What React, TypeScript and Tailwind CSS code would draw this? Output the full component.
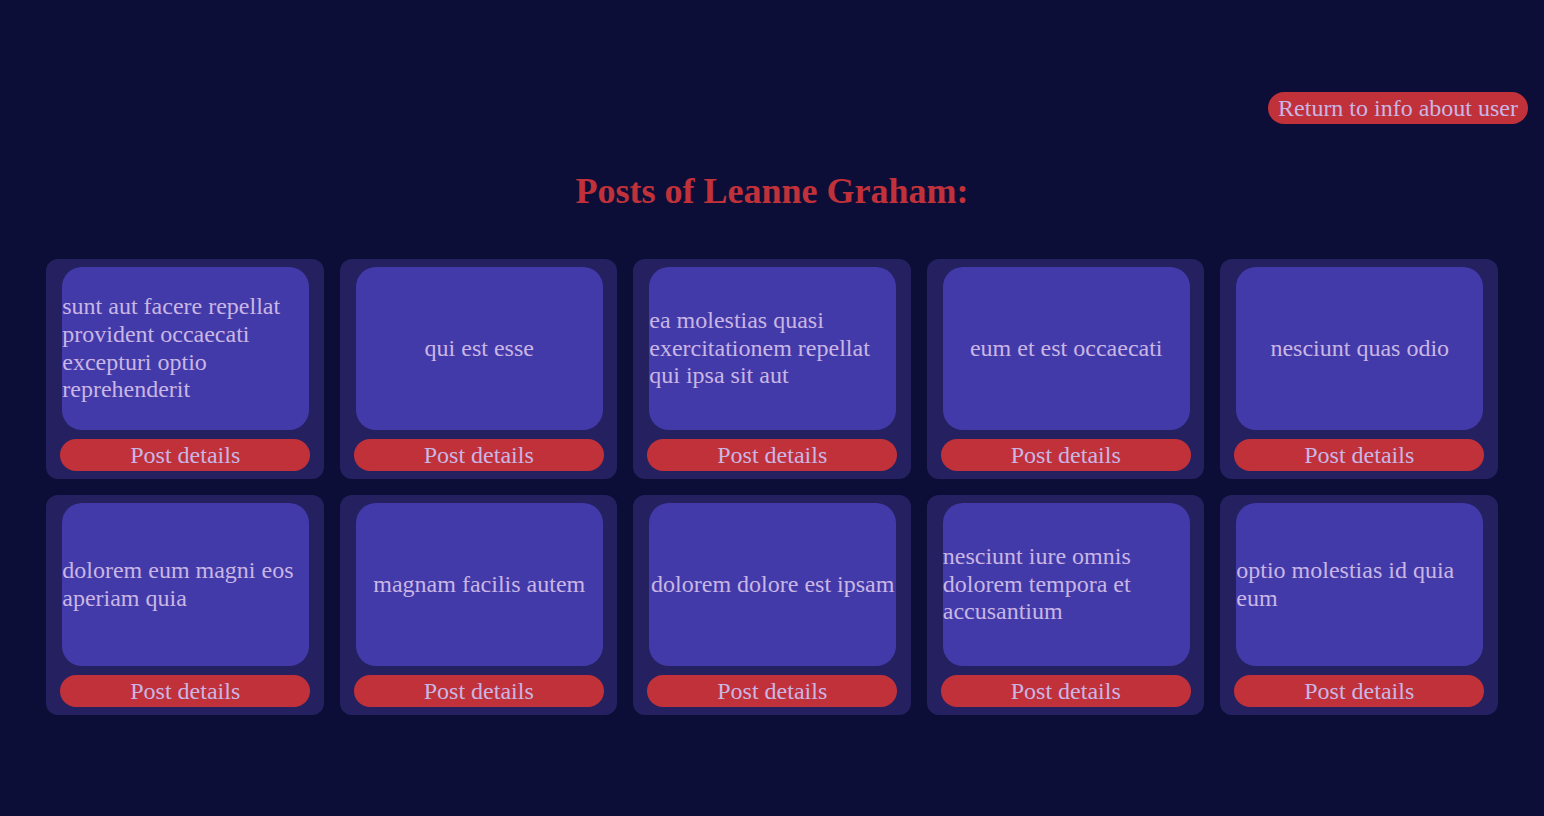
const posts = [
  "sunt aut facere repellat provident occaecati excepturi optio reprehenderit",
  "qui est esse",
  "ea molestias quasi exercitationem repellat qui ipsa sit aut",
  "eum et est occaecati",
  "nesciunt quas odio",
  "dolorem eum magni eos aperiam quia",
  "magnam facilis autem",
  "dolorem dolore est ipsam",
  "nesciunt iure omnis dolorem tempora et accusantium",
  "optio molestias id quia eum",
];

export default function App() {
  return (
    <div
      className="min-h-[816px] w-full bg-[#0c0e38] text-[#c9b6e4]"
      style={{ fontFamily: '"Liberation Serif", "Times New Roman", serif' }}
    >
      <div className="flex justify-end pt-[92px] pr-[16px]">
        <button className="h-[32px] rounded-full bg-[#c1313a] px-[10px] text-[24px] leading-[32px] text-[#c9b6e4]">
          Return to info about user
        </button>
      </div>
      <h1 className="mt-[47px] text-center text-[36px] font-bold leading-[41px] text-[#c1313a]">
        Posts of Leanne Graham:
      </h1>
      <div className="mt-[47px] flex justify-center">
        <div className="grid grid-cols-[repeat(5,277.5px)] gap-x-[16px] gap-y-[16px]">
          {posts.map((p, i) => (
            <div
              key={i}
              className="flex h-[220px] flex-col rounded-[12px] bg-[#252160] pt-[8px] pb-[8px]"
            >
              <div className="mx-[16px] flex h-[163px] w-[247px] items-center justify-center rounded-[20px] bg-[#433aa9] text-left text-[24px] leading-[27.6px]">
                {p}
              </div>
              <button className="mx-[14px] mt-[9px] h-[32px] w-[250px] rounded-full bg-[#c1313a] text-[24px] leading-[32px] text-[#c9b6e4]">
                Post details
              </button>
            </div>
          ))}
        </div>
      </div>
    </div>
  );
}
